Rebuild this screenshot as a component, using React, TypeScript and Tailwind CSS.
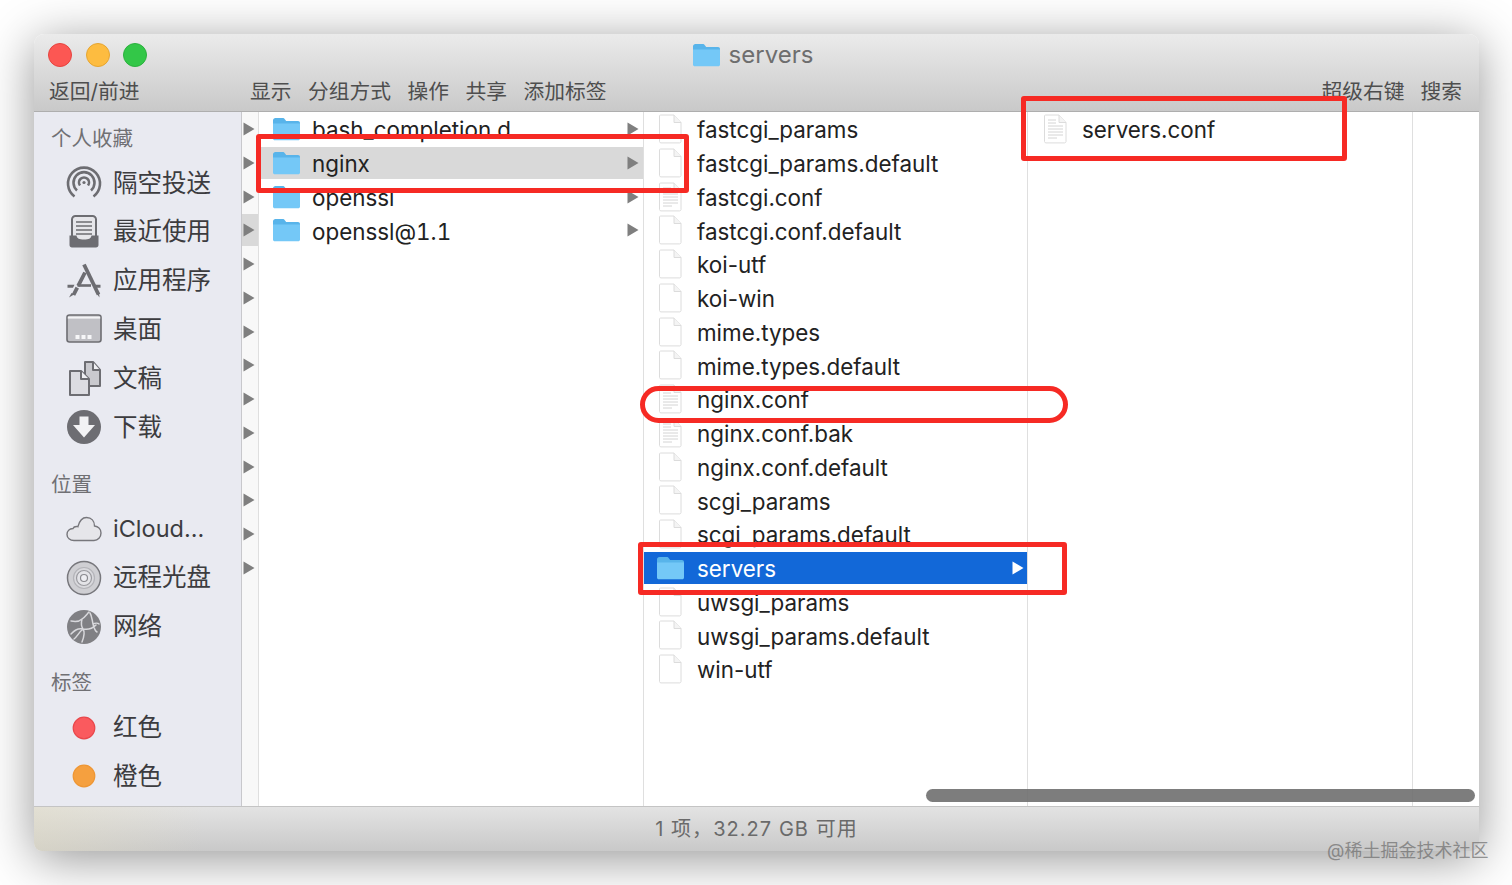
import React from 'react';

const SANS = 'font-["Inter","Noto_Sans_CJK_SC",sans-serif]';

const plainFiles = [
  { name: 'fastcgi_params' },
  { name: 'fastcgi_params.default' },
  { name: 'fastcgi.conf', text: true },
  { name: 'fastcgi.conf.default' },
  { name: 'koi-utf' },
  { name: 'koi-win' },
  { name: 'mime.types' },
  { name: 'mime.types.default' },
  { name: 'nginx.conf', text: true },
  { name: 'nginx.conf.bak', text: true },
  { name: 'nginx.conf.default' },
  { name: 'scgi_params' },
  { name: 'scgi_params.default' },
  { name: 'servers', folder: true },
  { name: 'uwsgi_params' },
  { name: 'uwsgi_params.default' },
  { name: 'win-utf' },
];

function Folder({ className = 'w-[29px] h-[24px]' }: { className?: string }) {
  return (
    <svg viewBox="0 0 29 24" className={className}>
      <path d="M1 3.500C1 2 2 1 3.500 1h7c1.200 0 1.800.5 2.500 1.400L14.200 4H26c1.200 0 2 .8 2 2v3H1z" fill="#58b4ea" />
      <path d="M1 6.500h27V21.500c0 1-.8 1.800-1.800 1.800H2.800C1.800 23.300 1 22.500 1 21.500z" fill="#74c8f7" />
    </svg>
  );
}

function FileIcon({ text }: { text?: boolean }) {
  return (
    <svg viewBox="0 0 23 30" className="w-[23px] h-[30px]">
      <path d="M1.500 1h13.500l7 7.500v19c0 .8-.6 1.400-1.400 1.400H1.900c-.8 0-1.400-.6-1.400-1.400V2c0-.6.400-1 1-1z" fill="#fff" stroke="#dcdcdc" />
      <path d="M15 1v7.500h7" fill="#f4f4f4" stroke="#dcdcdc" />
      {text && (
        <g stroke="#d4d4d4" strokeWidth="1">
          <path d="M4 6h8M4 9h8M4 12h15M4 15h15M4 18h15M4 21h15M4 24h9" />
        </g>
      )}
    </svg>
  );
}

function Arrow({ white }: { white?: boolean }) {
  return (
    <svg viewBox="0 0 12 14" className="w-[12px] h-[14px] shrink-0">
      <path d="M0.500 0.500L11.500 7L0.500 13.500z" fill={white ? '#fff' : '#7f7f7f'} />
    </svg>
  );
}

const AirDropIcon = () => (
  <svg viewBox="0 0 36 36" className="w-[36px] h-[36px]" fill="none" stroke="#6d6d72" strokeWidth="2.600">
    <path d="M8.500 31.500a16 16 0 1 1 19 0" />
    <path d="M11 25.500a10.500 10.500 0 1 1 14 0" />
    <path d="M14 20.500a5 5 0 1 1 8 0" />
    <circle cx="18" cy="17.500" r="1.600" fill="#6d6d72" stroke="none" />
  </svg>
);

const RecentsIcon = () => (
  <svg viewBox="0 0 36 36" className="w-[36px] h-[36px]">
    <rect x="6" y="2" width="24" height="25" rx="3.500" fill="#e6e6ea" stroke="#6d6d72" strokeWidth="2" />
    <path d="M10 8h16M10 12h16M10 16h16M10 20h16" stroke="#6d6d72" strokeWidth="1.500" />
    <path d="M3.500 21.500h7c.6 3 2.500 4 7.500 4s6.900-1 7.500-4h7V31c0 1.500-1 2.500-2.500 2.500H6C4.500 33.500 3.500 32.500 3.500 31z" fill="#6d6d72" />
  </svg>
);

const AppsIcon = () => (
  <svg viewBox="0 0 36 36" className="w-[36px] h-[36px]" fill="none" stroke="#6d6d72">
    <path d="M18 1.500l14.500 30" strokeWidth="3.800" />
    <path d="M19 9.500L7.500 32" strokeWidth="3.800" strokeDasharray="15 2 20" />
    <path d="M11.500 22.500h13.500" strokeWidth="2.600" />
    <path d="M1.500 21.800h7l-1.500 3H1.500zM34.500 21.800h-7l1.500 3h5.500z" fill="#6d6d72" stroke="none" />
    <path d="M3 34.500l2.500-4.500 2.500 1.500zM33.500 34.500l-3-4 2.500-1.500z" fill="#6d6d72" stroke="none" />
  </svg>
);

const DesktopIcon = () => (
  <svg viewBox="0 0 36 30" className="w-[36px] h-[30px]">
    <rect x="1" y="1" width="34" height="27" rx="2.500" fill="#c0c0c5" stroke="#6d6d72" strokeWidth="1.600" />
    <rect x="1.800" y="2.600" width="32.400" height="2" fill="#f4f4f6" />
    <path d="M9.500 21h4v4h-4zM15.500 21h4v4h-4zM21.500 21h4v4h-4z" fill="#f6f6f8" />
  </svg>
);

const DocsIcon = () => (
  <svg viewBox="0 0 36 36" className="w-[36px] h-[36px]" stroke="#6d6d72" strokeWidth="2" strokeLinejoin="round">
    <path d="M19 2h8l7 8v16H19z" fill="#c9c9ce" />
    <path d="M27 2v8h7" fill="#f0f0f3" />
    <path d="M4 11h11l8 8v16H4z" fill="#dcdce1" />
    <path d="M15 11v8h8" fill="#f0f0f3" />
  </svg>
);

const DownloadIcon = () => (
  <svg viewBox="0 0 36 36" className="w-[36px] h-[36px]">
    <circle cx="18" cy="18" r="17" fill="#6d6d72" />
    <path d="M13.500 7.500h9V16h6.500L18 28.500 7 16h6.500z" fill="#f2f2f4" />
  </svg>
);

const CloudIcon = () => (
  <svg viewBox="0 0 36 26" className="w-[36px] h-[26px]">
    <path d="M8 24.500C4 24.500 1 22 1 18.500c0-3.300 2.500-5.800 6-6 .4-1 1.500-2 3.500-2 .5 0 1 0 1.400.2C13.500 4.500 16.500 1.500 20.500 1.500c5 0 8 3.600 8 8.500 3.800.5 6.500 3.300 6.500 7 0 4-3 7.500-7 7.500z" fill="#e6e6ea" stroke="#77777c" strokeWidth="1.400" />
  </svg>
);

const DiscIcon = () => (
  <svg viewBox="0 0 36 36" className="w-[36px] h-[36px]" fill="none">
    <circle cx="18" cy="18" r="16.500" fill="#cfcfd3" stroke="#77777c" strokeWidth="1.500" />
    <circle cx="18" cy="18" r="10.500" stroke="#b4b4b9" strokeWidth="1.200" fill="#d9d9dd" />
    <circle cx="18" cy="18" r="7.500" stroke="#9b9ba0" strokeWidth="1.200" fill="#e4e4e8" />
    <circle cx="18" cy="18" r="3.500" stroke="#8a8a8f" strokeWidth="1.200" fill="#eeeef2" />
  </svg>
);

const GlobeIcon = () => (
  <svg viewBox="0 0 36 36" className="w-[36px] h-[36px]" fill="none">
    <circle cx="18" cy="18" r="17" fill="#808084" />
    <path d="M5 12c5 1 8 1 11-2 3-2 5-5 7-7M16 10c-1 4-1 7 1 10 2 3 1 8-1 13M5 25c3-3 6-6 12-5 5 1 9 0 13-4M24 4c2 3 2 7 3 11 1 4 2 7 4 8M8 30c3-2 5-7 9-10M27 15c2-1 5-1 6 0" stroke="#d8d8dc" strokeWidth="1.500" strokeLinecap="round" />
  </svg>
);

const DotIcon = ({ fill, ring }: { fill: string; ring: string }) => (
  <svg viewBox="0 0 24 24" className="w-[24px] h-[24px]">
    <circle cx="12" cy="12" r="10.800" fill={fill} stroke={ring} strokeWidth="1.200" />
  </svg>
);

function SidebarItem({ icon, label, small }: { icon: React.ReactNode; label: string; small?: boolean }) {
  return (
    <div className="h-[48.800px] flex items-center gap-[11px] pl-[32px] text-[#3c3c3f]">
      <span className="w-[36px] flex justify-center shrink-0">{icon}</span>
      <span className={small ? 'text-[23.500px]' : 'text-[24.500px]'}>{label}</span>
    </div>
  );
}

function SidebarHeader({ label }: { label: string }) {
  return <div className="h-[30px] mb-[4.600px] pl-[17px] flex items-center text-[20.500px] text-[#707074]">{label}</div>;
}

function Sidebar() {
  return (
    <div className="w-[208px] shrink-0 bg-[#e9eaf1] border-r border-[#c8c8cc] pt-[12px] overflow-hidden">
      <SidebarHeader label="个人收藏" />
      <div className="mb-[18.600px]">
        <SidebarItem icon={<AirDropIcon />} label="隔空投送" />
        <SidebarItem icon={<RecentsIcon />} label="最近使用" />
        <SidebarItem icon={<AppsIcon />} label="应用程序" />
        <SidebarItem icon={<DesktopIcon />} label="桌面" />
        <SidebarItem icon={<DocsIcon />} label="文稿" />
        <SidebarItem icon={<DownloadIcon />} label="下载" />
      </div>
      <SidebarHeader label="位置" />
      <div className="mb-[17.600px]">
        <SidebarItem icon={<CloudIcon />} label="iCloud..." small />
        <SidebarItem icon={<DiscIcon />} label="远程光盘" />
        <SidebarItem icon={<GlobeIcon />} label="网络" />
      </div>
      <SidebarHeader label="标签" />
      <SidebarItem icon={<DotIcon fill="#fa5a5e" ring="#e8474b" />} label="红色" />
      <SidebarItem icon={<DotIcon fill="#f5a03f" ring="#ee9633" />} label="橙色" />
    </div>
  );
}

function ArrowColumn() {
  return (
    <div className="w-[17px] shrink-0 border-r border-[#dfdfdf] bg-[#f8f8f8] pt-px">
      {Array.from({ length: 14 }).map((_, i) => (
        <div key={i} className="h-[33.750px]">
          <div className={`h-[32px] pl-px flex items-center ${i === 3 ? 'bg-[#d9d9d9]' : ''}`}>
            <Arrow />
          </div>
        </div>
      ))}
    </div>
  );
}

function FolderColumn() {
  const items = ['bash_completion.d', 'nginx', 'openssl', 'openssl@1.1'];
  return (
    <div className="w-[385px] shrink-0 border-r border-[#dfdfdf] pt-px">
      {items.map((name) => (
        <div key={name} className="h-[33.750px]">
          <div className={`h-[32px] flex items-center gap-[11px] pl-[13px] pr-[4px] ${name === 'nginx' ? 'bg-[#d9d9d9]' : ''}`}>
            <Folder />
            <span className="text-[22.400px] tabular-nums text-[#222222] leading-none flex-1 pt-[3px]">{name}</span>
            <Arrow />
          </div>
        </div>
      ))}
    </div>
  );
}

function FileColumn() {
  return (
    <div className="w-[384px] shrink-0 border-r border-[#dfdfdf] pt-px">
      {plainFiles.map((f) => (
        <div key={f.name} className="h-[33.750px]">
          <div className={`h-[32px] flex items-center gap-[12px] pl-[12px] pr-[3px] ${f.folder ? 'bg-[#1268d8]' : ''}`}>
            <span className="w-[29px] flex justify-center shrink-0">
              {f.folder ? <Folder /> : <FileIcon text={f.text} />}
            </span>
            <span className={`text-[22.400px] leading-none flex-1 pt-[3px] ${f.folder ? 'text-white' : 'text-[#222222]'}`}>{f.name}</span>
            {f.folder && <Arrow white />}
          </div>
        </div>
      ))}
    </div>
  );
}

function LastColumn() {
  return (
    <div className="w-[385px] shrink-0 border-r border-[#dfdfdf] pt-px">
      <div className="h-[32px] flex items-center gap-[12px] pl-[13px]">
        <span className="w-[29px] flex justify-center shrink-0">
          <FileIcon text />
        </span>
        <span className="text-[22.400px] leading-none text-[#222222] pt-[3px]">servers.conf</span>
      </div>
    </div>
  );
}

function TitleBar() {
  return (
    <div className="h-[78px] shrink-0 bg-linear-to-b from-[#ebebeb] to-[#c9c9c9] border-b border-[#aeaeae] flex flex-col">
      <div className="relative h-[40px] flex items-center justify-center pt-[2px]">
        <div className="absolute left-[14px] top-[9px] flex gap-[13.500px]">
          <span className="w-[24px] h-[24px] rounded-full bg-[#fc5753] border border-[#e5443f]" />
          <span className="w-[24px] h-[24px] rounded-full bg-[#fdbc40] border border-[#e5a531]" />
          <span className="w-[24px] h-[24px] rounded-full bg-[#33c748] border border-[#2cb03e]" />
        </div>
        <div className="flex items-center gap-[8px] pr-[8px]">
          <Folder />
          <span className="text-[24px] text-[#6e6e6e] leading-none">servers</span>
        </div>
      </div>
      <div className="flex items-center pt-[2px] pl-[15px] pr-[17px] text-[20.750px] text-[#4e4e4e]">
        <span className="w-[201px]">返回/前进</span>
        <span className="flex gap-[16.500px]">
          <span>显示</span>
          <span>分组方式</span>
          <span>操作</span>
          <span>共享</span>
          <span>添加标签</span>
        </span>
        <span className="ml-auto flex gap-[16px]">
          <span>超级右键</span>
          <span>搜索</span>
        </span>
      </div>
    </div>
  );
}

export default function App() {
  return (
    <div className={`relative w-[1512px] h-[885px] overflow-hidden bg-white pt-[34px] pl-[34px] ${SANS}`}>
      <div className="w-[1445px] h-[817px] rounded-t-[10px] rounded-b-[8px] overflow-hidden flex flex-col shadow-[0_8px_50px_rgba(0,0,0,0.42)]">
        <TitleBar />
        <div className="relative flex-1 flex min-h-0 bg-white">
          <Sidebar />
          <ArrowColumn />
          <FolderColumn />
          <FileColumn />
          <LastColumn />
          <div className="absolute left-[892px] right-[4px] bottom-[4px] h-[13px] rounded-full bg-[#6f6f6f]/90" />
        </div>
        <div className="relative h-[45px] shrink-0 bg-linear-to-b from-[#e3e3e3] to-[#c9c9c9] border-t border-[#c4c4c4] flex items-center justify-center text-[20px] tracking-[1.050px] text-[#6a6a6a]">
          <div className="absolute inset-y-0 left-0 w-[170px] bg-linear-to-r from-[#e2dcc4]/50 to-transparent" />
          <span className="relative">1 项，32.27 GB 可用</span>
        </div>
      </div>

      {/* red markup boxes drawn on top of the screenshot */}
      <div className="absolute left-[256px] top-[134px] w-[433px] h-[59px] border-[5px] border-[#f62a24] rounded-[3px]" />
      <div className="absolute left-[1021px] top-[96px] w-[326px] h-[65px] border-[5px] border-[#f62a24] rounded-[3px]" />
      <div className="absolute left-[640px] top-[386px] w-[428px] h-[37px] border-[5px] border-[#f62a24] rounded-full" />
      <div className="absolute left-[638px] top-[542px] w-[429px] h-[53px] border-[5px] border-[#f62a24] rounded-[3px]" />

      <div className="absolute left-[1327px] top-[839px] text-[18px] leading-[24px] text-[#6b6b6b]/70">@稀土掘金技术社区</div>
    </div>
  );
}
